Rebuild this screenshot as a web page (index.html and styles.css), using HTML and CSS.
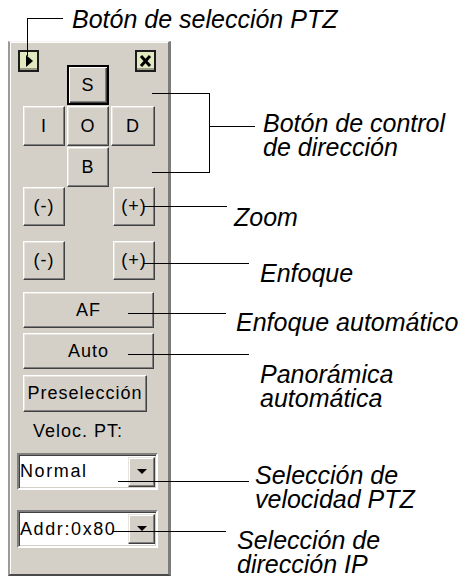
FILE: index.html
```html
<!DOCTYPE html>
<html lang="es">
<head>
    <meta charset="UTF-8">
    <meta name="viewport" content="width=device-width, initial-scale=1.0">
    <title>Panel PTZ</title>
    <link rel="stylesheet" href="styles.css">
</head>
<body>
    <div class="figure">
        <div class="panel">
            <div class="panel-top">
                <span class="tool-icon">
                    <svg width="21" height="22" viewBox="0 0 21 22">
                        <rect x="0" y="0" width="21" height="22" fill="#1c1c1c"/>
                        <rect x="2" y="2" width="17" height="18" fill="#e2e8c0"/>
                        <rect x="2" y="18" width="17" height="2" fill="#9a9c88"/>
                        <polygon points="8,5 15,11 8,17" fill="#000"/>
                    </svg>
                </span>
                <span class="tool-icon">
                    <svg width="21" height="22" viewBox="0 0 21 22">
                        <rect x="0" y="0" width="21" height="22" fill="#1c1c1c"/>
                        <rect x="2" y="2" width="17" height="18" fill="#e2e8c0"/>
                        <rect x="2" y="18" width="17" height="2" fill="#9a9c88"/>
                        <path d="M6 6 L15 16 M15 6 L6 16" stroke="#000" stroke-width="3"/>
                    </svg>
                </span>
            </div>

            <div class="cross">
                <button class="btn default dir-up">S</button>
                <button class="btn dir-left">I</button>
                <button class="btn dir-center">O</button>
                <button class="btn dir-right">D</button>
                <button class="btn dir-down">B</button>
            </div>

            <div class="pair">
                <button class="btn small">(-)</button>
                <button class="btn small">(+)</button>
            </div>
            <div class="pair focus">
                <button class="btn small">(-)</button>
                <button class="btn small">(+)</button>
            </div>

            <button class="btn wide af">AF</button>
            <button class="btn wide auto">Auto</button>
            <button class="btn preset">Preselección</button>

            <div class="speed-label">Veloc. PT:</div>

            <div class="combo speed">
                <span class="combo-value">Normal</span>
                <span class="combo-drop">
                    <svg width="10" height="6" viewBox="0 0 10 6"><polygon points="0,0 10,0 5,5" fill="#000"/></svg>
                </span>
            </div>
            <div class="combo addr">
                <span class="combo-value">Addr:0x80</span>
                <span class="combo-drop">
                    <svg width="10" height="6" viewBox="0 0 10 6"><polygon points="0,0 10,0 5,5" fill="#000"/></svg>
                </span>
            </div>
        </div>

        <!-- leader lines and labels -->
        <div class="callouts">
            <span class="ln ln-ptz-h"></span>
            <span class="ln ln-ptz-v"></span>
            <span class="label lb-ptz">Botón de selección PTZ</span>

            <span class="ln ln-dir-top"></span>
            <span class="ln ln-dir-v"></span>
            <span class="ln ln-dir-bottom"></span>
            <span class="ln ln-dir-mid"></span>
            <span class="label lb-dir">Botón de control<br>de dirección</span>

            <span class="ln ln-zoom"></span>
            <span class="label lb-zoom">Zoom</span>

            <span class="ln ln-focus"></span>
            <span class="label lb-focus">Enfoque</span>

            <span class="ln ln-af"></span>
            <span class="label lb-af">Enfoque automático</span>

            <span class="ln ln-auto"></span>
            <span class="label lb-auto">Panorámica<br>automática</span>

            <span class="ln ln-speed"></span>
            <span class="label lb-speed">Selección de<br>velocidad PTZ</span>

            <span class="ln ln-addr"></span>
            <span class="label lb-addr">Selección de<br>dirección IP</span>
        </div>
    </div>
</body>
</html>
```

FILE: styles.css
```css
body {
    margin: 0;
    background: #fff;
    font-family: "Liberation Sans", Arial, sans-serif;
    color: #000;
}
.figure {
    position: relative;
    width: 465px;
    height: 577px;
    overflow: hidden;
}

/* the PTZ tool window */
.panel {
    box-sizing: border-box;
    width: 163px;
    height: 535px;
    margin: 41px 0 0 8px;
    background: #d4d0c8;
    border-style: solid;
    border-width: 1px 3px 2px 2px;
    border-color: #f2f1ed #7c7c7c #4a4a4a #9c9a95;
    box-shadow: inset 1px 1px #fff;
    display: flex;
    flex-direction: column;
    align-items: flex-start;
}
.panel-top {
    display: flex;
    justify-content: space-between;
    align-self: stretch;
    margin-top: 8px;
    padding: 0 12px 0 8px;
    height: 22px;
}
.tool-icon {
    display: block;
    width: 21px;
    height: 22px;
}
.tool-icon svg {
    display: block;
}

.btn {
    box-sizing: border-box;
    display: flex;
    align-items: center;
    justify-content: center;
    padding: 0;
    margin: 0;
    background: #d4d0c8;
    color: #000;
    font-family: "Liberation Sans", Arial, sans-serif;
    font-size: 18px;
    letter-spacing: 1px;
    border: 1px solid;
    border-color: #fff #404040 #404040 #fff;
    box-shadow: inset -1px -1px #808080, inset 1px 1px #e6e4de;
}
.btn.default {
    border: 2px solid #000;
    box-shadow: inset 1px 1px #fff, inset -1px -1px #404040, inset -2px -2px #808080;
}

.cross {
    display: grid;
    grid-template-columns: 42px 42px 44px;
    grid-template-rows: 40px 40px 40px;
    column-gap: 2px;
    row-gap: 1px;
    margin: -7px 0 0 13px;
}
.dir-up { grid-column: 2; grid-row: 1; }
.dir-left { grid-column: 1; grid-row: 2; }
.dir-center { grid-column: 2; grid-row: 2; }
.dir-right { grid-column: 3; grid-row: 2; }
.dir-down { grid-column: 2; grid-row: 3; }

.pair {
    display: flex;
    justify-content: space-between;
    align-self: stretch;
    padding: 0 13px;
}
.pair.focus {
    margin-top: 15px;
}
.btn.small {
    width: 42px;
    height: 39px;
}

.btn.wide {
    width: 131px;
    height: 36px;
    margin-left: 13px;
}
.btn.af {
    margin-top: 12px;
}
.btn.auto {
    margin-top: 5px;
}
.btn.preset {
    width: 124px;
    height: 37px;
    margin: 6px 0 0 13px;
}

.speed-label {
    margin-top: 9px;
    padding-left: 23px;
    font-size: 18px;
    line-height: 20px;
    letter-spacing: 1px;
}

.combo {
    box-sizing: border-box;
    display: flex;
    align-items: center;
    width: 141px;
    margin-left: 7px;
    background: #fff;
    border: 2px solid;
    border-color: #808080 #fff #fff #808080;
    box-shadow: inset 1px 1px #404040, inset -1px -1px #d4d0c8;
}
.combo.speed {
    height: 37px;
    margin-top: 12px;
}
.combo.addr {
    height: 38px;
    margin-top: 20px;
}
.combo-value {
    flex: 1;
    padding-left: 1px;
    font-size: 18px;
    letter-spacing: 1.6px;
}
.combo-drop {
    box-sizing: border-box;
    display: flex;
    align-items: center;
    justify-content: center;
    width: 27px;
    height: 30px;
    margin-right: 1px;
    background: #d4d0c8;
    border: 1px solid;
    border-color: #e6e4de #404040 #404040 #e6e4de;
    box-shadow: inset -1px -1px #808080, inset 1px 1px #fff;
}
.combo-drop svg {
    display: block;
}

/* callouts */
.callouts {
    position: absolute;
    inset: 0;
    pointer-events: none;
}
.ln {
    position: absolute;
    background: #000;
}
.label {
    position: absolute;
    font-style: italic;
    font-size: 25px;
    line-height: 24px;
    white-space: nowrap;
}

.ln-ptz-h { left: 27px; top: 18px; width: 36px; height: 1px; }
.ln-ptz-v { left: 27px; top: 18px; width: 1px; height: 38px; }
.lb-ptz { left: 72px; top: 7px; }

.ln-dir-top { left: 152px; top: 93px; width: 58px; height: 1px; }
.ln-dir-v { left: 209px; top: 93px; width: 1px; height: 80px; }
.ln-dir-bottom { left: 152px; top: 172px; width: 58px; height: 1px; }
.ln-dir-mid { left: 209px; top: 126px; width: 46px; height: 1px; }
.lb-dir { left: 263px; top: 111px; }

.ln-zoom { left: 143px; top: 206px; width: 84px; height: 1px; }
.lb-zoom { left: 234px; top: 205px; }

.ln-focus { left: 143px; top: 263px; width: 106px; height: 1px; }
.lb-focus { left: 260px; top: 261px; }

.ln-af { left: 128px; top: 313px; width: 98px; height: 1px; }
.lb-af { left: 236px; top: 310px; }

.ln-auto { left: 128px; top: 354px; width: 121px; height: 1px; }
.lb-auto { left: 260px; top: 362px; }

.ln-speed { left: 118px; top: 481px; width: 131px; height: 1px; }
.lb-speed { left: 255px; top: 463px; }

.ln-addr { left: 112px; top: 531px; width: 114px; height: 1px; }
.lb-addr { left: 237px; top: 528px; }
```
